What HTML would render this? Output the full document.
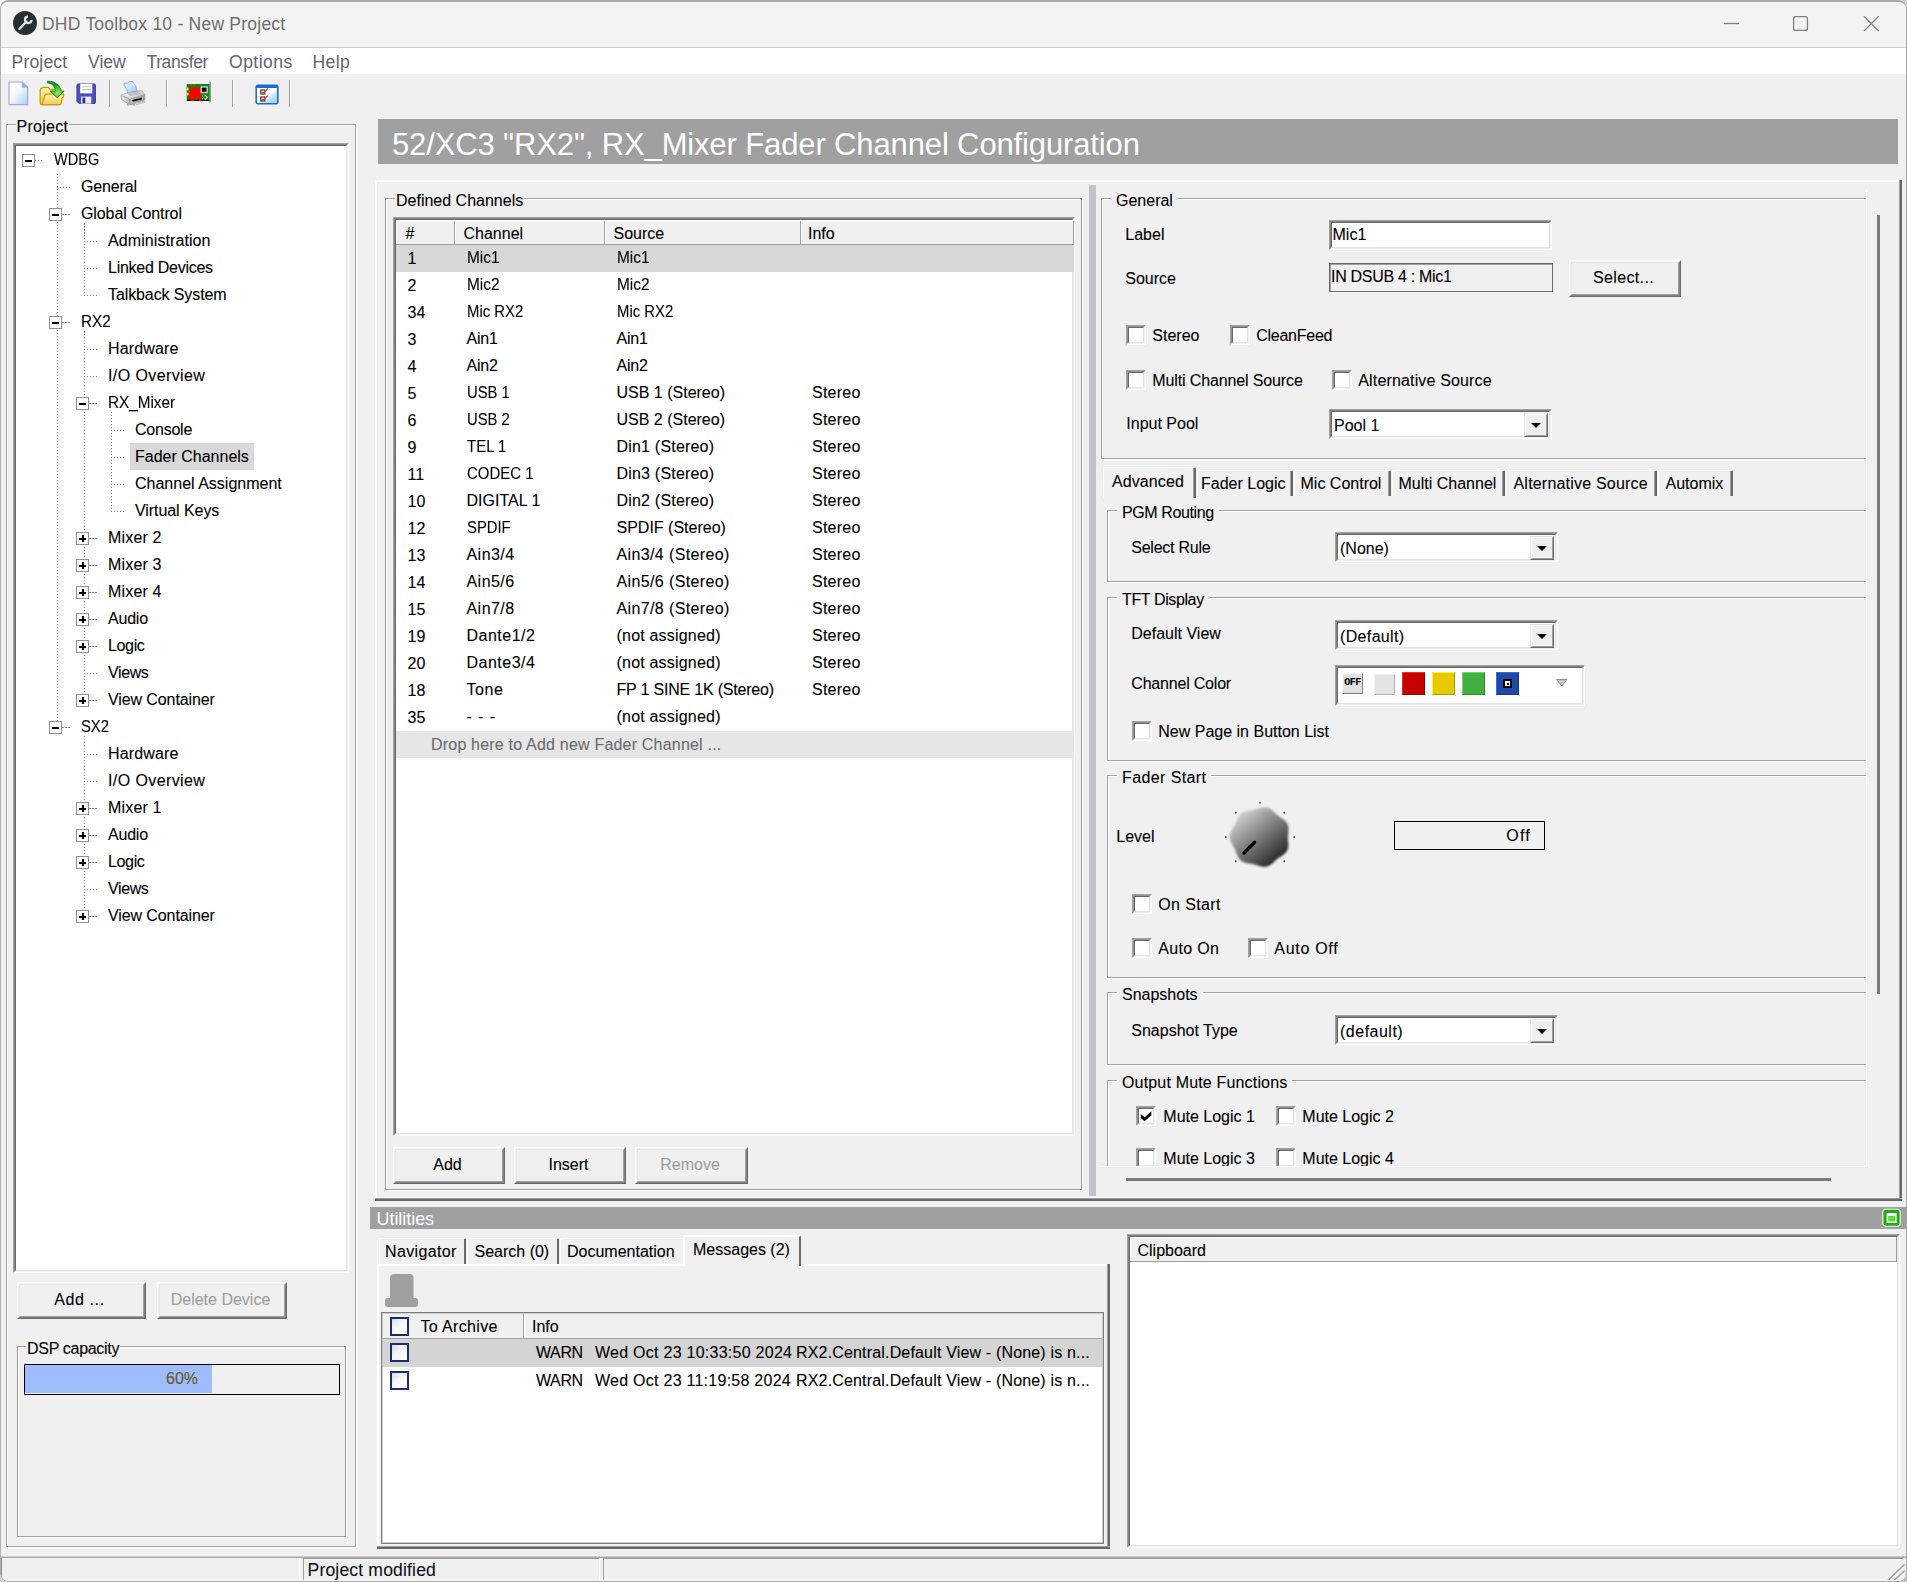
<!DOCTYPE html>
<html><head><meta charset="utf-8"><title>DHD Toolbox 10 - New Project</title>
<style>
html,body{margin:0;padding:0;background:#dcdcdc;}
body{width:1907px;height:1582px;overflow:hidden;position:relative;font-family:"Liberation Sans", sans-serif;font-size:16px;-webkit-text-stroke:0.1px currentColor;}
#win{position:absolute;left:0;top:0;width:1907px;height:1582px;box-sizing:border-box;background:#f0f0f0;border-radius:8px;overflow:hidden;}
#win div{position:absolute;}
#win svg{position:absolute;}
.cn{position:absolute;width:10px;height:10px;}
</style></head><body>
<div class="cn" style="left:0;top:0;background:#fdfdfd"></div><div class="cn" style="right:0;top:0;background:#cfcfcf"></div><div class="cn" style="left:0;bottom:0;background:#d0d2d3"></div><div class="cn" style="right:0;bottom:0;background:#bebebe"></div>
<div id="win">
<div style="left:0px;top:0px;width:1907px;height:47px;background:#f3f3f3;"></div>
<div style="left:0px;top:47px;width:1907px;height:1px;background:#cfcfcf;"></div>
<div style="left:0px;top:48px;width:1907px;height:26px;background:#fff;"></div>
<svg style="left:12px;top:10px" width="26" height="26" viewBox="0 0 26 26"><circle cx="13" cy="13" r="12" fill="#272f32"/><path d="M19.6 10.0 A3.3 3.3 0 1 1 16.0 6.4" fill="none" stroke="#dfe4e5" stroke-width="2.3" stroke-linecap="butt"/><path d="M14.2 11.8 L7.4 19.0" stroke="#dfe4e5" stroke-width="2.4" stroke-linecap="round" fill="none"/></svg>
<div style="left:42px;top:14px;font-size:17.5px;line-height:21px;color:#6e6e6e;white-space:nowrap;letter-spacing:0.23px;-webkit-text-stroke:0;">DHD Toolbox 10 - New Project</div>
<svg style="left:1700px;top:0" width="207" height="47" viewBox="0 0 207 47"><path d="M24 23.5 H39" stroke="#808080" stroke-width="1.3" fill="none"/><rect x="93.6" y="16.6" width="13.8" height="13.8" rx="2" fill="none" stroke="#808080" stroke-width="1.3"/><path d="M164 16.3 L178.7 31 M178.7 16.3 L164 31" stroke="#808080" stroke-width="1.3" fill="none"/></svg>
<div style="left:11.5px;top:52px;font-size:17.6px;line-height:21px;color:#656270;white-space:nowrap;letter-spacing:0.15px;-webkit-text-stroke:0;">Project</div>
<div style="left:88px;top:52px;font-size:17.6px;line-height:21px;color:#656270;white-space:nowrap;letter-spacing:0px;-webkit-text-stroke:0;">View</div>
<div style="left:146.5px;top:52px;font-size:17.6px;line-height:21px;color:#656270;white-space:nowrap;letter-spacing:-0.42px;-webkit-text-stroke:0;">Transfer</div>
<div style="left:229px;top:52px;font-size:17.6px;line-height:21px;color:#656270;white-space:nowrap;letter-spacing:0.45px;-webkit-text-stroke:0;">Options</div>
<div style="left:312.5px;top:52px;font-size:17.6px;line-height:21px;color:#656270;white-space:nowrap;letter-spacing:0.4px;-webkit-text-stroke:0;">Help</div>
<div style="left:109px;top:80px;width:1px;height:27px;background:#a0a0a0;"></div>
<div style="left:110px;top:80px;width:1px;height:27px;background:#fff;"></div>
<div style="left:166px;top:80px;width:1px;height:27px;background:#a0a0a0;"></div>
<div style="left:167px;top:80px;width:1px;height:27px;background:#fff;"></div>
<div style="left:232px;top:80px;width:1px;height:27px;background:#a0a0a0;"></div>
<div style="left:233px;top:80px;width:1px;height:27px;background:#fff;"></div>
<div style="left:289px;top:80px;width:1px;height:27px;background:#a0a0a0;"></div>
<div style="left:290px;top:80px;width:1px;height:27px;background:#fff;"></div>
<svg style="left:8px;top:81.3px" width="20.6" height="24.6" viewBox="0 0 21 25.5" preserveAspectRatio="none"><defs><linearGradient id="gdoc" x1="0" y1="0" x2="1" y2="1"><stop offset="0" stop-color="#ffffff"/><stop offset="0.45" stop-color="#f4f8fe"/><stop offset="1" stop-color="#a9d0f5"/></linearGradient></defs><path d="M1 1 H14.5 L20 6.5 V24.5 H1 Z" fill="url(#gdoc)" stroke="#a9a5dd" stroke-width="1.2"/><path d="M14.5 1 V6.5 H20 Z" fill="#7fb8f0" stroke="#a9a5dd" stroke-width="0.8"/></svg>
<svg style="left:39px;top:80px" width="27" height="27" viewBox="0 0 27 27"><defs><linearGradient id="gfol" x1="0" y1="0" x2="0" y2="1"><stop offset="0" stop-color="#fff3a8"/><stop offset="1" stop-color="#fbc858"/></linearGradient><linearGradient id="gfob" x1="0" y1="0" x2="0" y2="1"><stop offset="0" stop-color="#fffba4"/><stop offset="1" stop-color="#f3c650"/></linearGradient><radialGradient id="garr" cx="0.62" cy="0.72" r="0.5"><stop offset="0" stop-color="#8cec60"/><stop offset="0.6" stop-color="#4cc432"/><stop offset="1" stop-color="#1c9418"/></radialGradient></defs><path d="M1.2 10 Q1.2 8.2 3 8 L4.2 7.4 H9.6 L10.9 9.3 H20 V24.6 H2.6 Q1.2 24.6 1.2 23 Z" fill="url(#gfob)" stroke="#c89a14" stroke-width="1.3" stroke-linejoin="round"/><path d="M6.3 14.2 H24.6 L24.4 17 L23 18 L22.6 22 L21.6 24.6 H3 L5 18 Z" fill="url(#gfol)" stroke="#c89a14" stroke-width="1.3" stroke-linejoin="round"/><path d="M8.3 1.2 Q15.5 0.8 19.7 5.7 Q21.8 8.2 22.3 11.05 L25.1 11.05 L18.2 17.7 L11.3 11.05 L16.5 11.05 Q16.3 8.5 15.0 6.2 Q12.8 3 8.3 2.9 Z" fill="url(#garr)" stroke="#168a12" stroke-width="0.9" stroke-linejoin="round"/></svg>
<svg style="left:75.6px;top:82.6px" width="20.4" height="21.6" viewBox="0 0 22 23" preserveAspectRatio="none"><path d="M1 2.5 Q1 1 2.5 1 H19.5 Q21 1 21 2.5 V20.5 Q21 22 19.5 22 H3.5 L1 19.5 Z" fill="#4a4fc0" stroke="#3a3da0" stroke-width="1"/><rect x="4.5" y="1" width="13" height="10" fill="#fff"/><path d="M6 4 H16 M6 7 H16" stroke="#c8c8c8" stroke-width="1.2"/><rect x="5.5" y="14.5" width="11" height="7.5" fill="#ecebe6"/><rect x="7" y="15.5" width="3" height="6" fill="#2a2da0"/></svg>
<svg style="left:120px;top:80px" width="27" height="27" viewBox="0 0 27 27"><defs><linearGradient id="gprn" x1="0" y1="0" x2="1" y2="0.6"><stop offset="0" stop-color="#ffffff"/><stop offset="1" stop-color="#c4c4c4"/></linearGradient><linearGradient id="gprf" x1="0" y1="0" x2="1" y2="0"><stop offset="0" stop-color="#ececec"/><stop offset="1" stop-color="#b4b4b4"/></linearGradient><linearGradient id="gprr" x1="0" y1="0" x2="1" y2="0"><stop offset="0" stop-color="#c6c6c6"/><stop offset="1" stop-color="#9c9c9c"/></linearGradient><linearGradient id="gpap" x1="0.1" y1="0" x2="0.9" y2="1"><stop offset="0" stop-color="#f4fbff"/><stop offset="1" stop-color="#8fcdf6"/></linearGradient></defs><path d="M1.2 15.3 L10 19 V25 L1.2 19.2 Z" fill="url(#gprf)" stroke="#9e9e9e" stroke-width="0.8"/><path d="M10 19 L24.8 14.5 V19.8 L10 25 Z" fill="url(#gprr)" stroke="#949494" stroke-width="0.8"/><path d="M1.2 15.3 L8 12.3 L21.8 10.6 L24.8 14.5 L10 19 Z" fill="url(#gprn)" stroke="#a4a4a4" stroke-width="0.8"/><path d="M7.2 13.4 L18 10.9 L20.5 13.6 L10.5 16.3 Z" fill="#b8b8bc" opacity="0.75"/><path d="M12 19.9 L21.8 17.7 V19.4 L12.8 21.7 Z" fill="#0c0c0c"/><path d="M15 23 L24.8 21.2 V22.3 L16.5 24.7 Z" fill="#e0e0e0" stroke="#a8a8a8" stroke-width="0.7"/><rect x="6.8" y="24" width="2.4" height="1.6" fill="#a8a8a8"/><rect x="12.6" y="24" width="2.4" height="1.6" fill="#a8a8a8"/><path d="M4 3.1 H8 L8.9 1.6 H12.8 L13.2 3.1 L15.8 5.3 L16.4 9.8 L17.5 10.6 L7.6 13.2 L7.2 9.8 L5.3 8 V6.1 L4 5.7 Z" fill="url(#gpap)" stroke="#a29ede" stroke-width="0.9" stroke-linejoin="round"/></svg>
<svg style="left:186px;top:81px" width="26" height="23" viewBox="0 0 26 23"><defs><linearGradient id="gcard" x1="0" y1="0" x2="0" y2="1"><stop offset="0" stop-color="#0a8a0a"/><stop offset="0.86" stop-color="#0a8a0a"/><stop offset="0.95" stop-color="#042a04"/><stop offset="1" stop-color="#000"/></linearGradient><radialGradient id="gyel" cx="0.2" cy="0.5" r="0.8"><stop offset="0" stop-color="#ffff20"/><stop offset="0.55" stop-color="#ffe010"/><stop offset="1" stop-color="#ff2000" stop-opacity="0"/></radialGradient></defs><rect x="0.7" y="3" width="23" height="17" fill="url(#gcard)"/><rect x="23.6" y="0.4" width="1.2" height="21" fill="#7c7c7c"/><path d="M3.2 6.6 H14.5 L15.5 8 V20 H13.4 L10.6 15 L7.8 20 H5.5 L4 18 L0.7 14.3 V13 L3 12.2 L5.2 10.3 L3 8.4 L0.7 8 V6.6 Z" fill="#ff0000"/><rect x="0.7" y="6.4" width="2.6" height="3.2" fill="url(#gyel)"/><rect x="0.7" y="11.6" width="2.6" height="3" fill="url(#gyel)"/><rect x="4" y="3.3" width="1.6" height="1.6" fill="#f03018"/><rect x="7.2" y="3.3" width="1.6" height="1.6" fill="#f03018"/><rect x="15.2" y="5.9" width="6" height="5.6" fill="#000" stroke="#c4c8c4" stroke-width="1.5"/><path d="M16 15 H19 M16 17.8 H19" stroke="#b4d4b4" stroke-width="1.0" stroke-dasharray="1.1 0.9" fill="none"/><path d="M18.8 13.8 L21.4 16.4 L18.8 19" stroke="#c4dcc4" stroke-width="1.1" fill="none"/></svg>
<svg style="left:255px;top:84px" width="24" height="21" viewBox="0 0 24 21"><defs><linearGradient id="gchk" x1="0.3" y1="0.1" x2="0.95" y2="0.95"><stop offset="0" stop-color="#ffffff"/><stop offset="0.4" stop-color="#ffffff"/><stop offset="0.75" stop-color="#b4daff"/><stop offset="1" stop-color="#a4d0fc"/></linearGradient></defs><rect x="1.2" y="1.2" width="21.6" height="18.6" rx="1.5" fill="url(#gchk)" stroke="#1a6bd6" stroke-width="1.6"/><rect x="1.2" y="1" width="21.6" height="3" fill="#1a6bd6"/><rect x="5.8" y="6" width="4" height="4" fill="none" stroke="#4a3636" stroke-width="1.2"/><rect x="5.8" y="13" width="4" height="4" fill="none" stroke="#4a3636" stroke-width="1.2"/><path d="M6.8 8 L8 9.3 L13 4.5 M6.8 15 L8 16.3 L13 11.5" stroke="#e0442a" stroke-width="1.3" fill="none"/></svg>
<div style="left:0px;top:1556px;width:1907px;height:1px;background:#cecece;"></div>
<div style="left:0px;top:1557px;width:1907px;height:1px;background:#a6a6a6;"></div>
<div style="left:299px;top:1558px;width:1px;height:23px;background:#fff;"></div>
<div style="left:303px;top:1558px;width:1px;height:23px;background:#a0a0a0;"></div>
<div style="left:303px;top:1558px;width:296px;height:1px;background:#a0a0a0;"></div>
<div style="left:599px;top:1558px;width:1px;height:23px;background:#fff;"></div>
<div style="left:603px;top:1558px;width:1px;height:23px;background:#a0a0a0;"></div>
<div style="left:603px;top:1558px;width:1300px;height:1px;background:#a0a0a0;"></div>
<div style="left:307.5px;top:1560px;font-size:17.6px;line-height:21px;color:#101020;white-space:nowrap;letter-spacing:0.15px;">Project modified</div>
<svg style="left:1884px;top:1560px" width="22" height="21" viewBox="0 0 22 21"><path d="M4.2 20.2 L20.2 4.8 M10.6 20.2 L20.2 11" stroke="#a2a2a2" stroke-width="1.7" stroke-linecap="round"/><path d="M5.8 20.4 L20.4 6.4 M12.2 20.4 L20.4 12.6 M17 20.4 L20.6 17" stroke="#fff" stroke-width="0.9"/></svg>
<div style="left:0px;top:1580px;width:1907px;height:1px;background:#fbfbfb;"></div>
<div style="left:1px;top:1558px;width:1px;height:20px;background:#8a8a8a;"></div>
<div style="left:6px;top:124px;width:350px;height:1px;background:#a0a0a0;"></div>
<div style="left:7px;top:125px;width:348px;height:1px;background:#fff;"></div>
<div style="left:6px;top:124px;width:1px;height:1423px;background:#a0a0a0;"></div>
<div style="left:7px;top:125px;width:1px;height:1421px;background:#fff;"></div>
<div style="left:355px;top:124px;width:1px;height:1423px;background:#a0a0a0;"></div>
<div style="left:356px;top:124px;width:1px;height:1424px;background:#fff;"></div>
<div style="left:6px;top:1546px;width:350px;height:1px;background:#a0a0a0;"></div>
<div style="left:6px;top:1547px;width:351px;height:1px;background:#fff;"></div>
<div style="left:16.6px;top:118px;font-size:16px;line-height:18px;color:#000;white-space:nowrap;background:#f0f0f0;padding:0 1px;margin-left:-1px;letter-spacing:0.25px;">Project</div>
<div style="left:13px;top:143px;width:336px;height:1130px;background:#fff;box-sizing:border-box;border:1px solid;border-color:#a0a0a0 #fff #fff #a0a0a0;"><div style="position:absolute;left:0;top:0;right:0;bottom:0;border:1px solid;border-color:#858585 #f1f1f1 #f1f1f1 #858585;box-sizing:border-box;"></div><div style="position:absolute;left:1px;top:1px;right:1px;bottom:1px;border:1px solid;border-color:#696969 #e3e3e3 #e3e3e3 #696969;box-sizing:border-box;"></div></div>
<div style="left:57px;top:174px;width:1px;height:547px;background:repeating-linear-gradient(to bottom,#858585 0 1.5px,transparent 1.5px 3px);"></div>
<div style="left:84px;top:223px;width:1px;height:73px;background:repeating-linear-gradient(to bottom,#858585 0 1.5px,transparent 1.5px 3px);"></div>
<div style="left:84px;top:331px;width:1px;height:363px;background:repeating-linear-gradient(to bottom,#858585 0 1.5px,transparent 1.5px 3px);"></div>
<div style="left:84px;top:736px;width:1px;height:174px;background:repeating-linear-gradient(to bottom,#858585 0 1.5px,transparent 1.5px 3px);"></div>
<div style="left:111px;top:412px;width:1px;height:100px;background:repeating-linear-gradient(to bottom,#858585 0 1.5px,transparent 1.5px 3px);"></div>
<div style="left:35px;top:160px;width:9px;height:1px;background:repeating-linear-gradient(to right,#858585 0 1.5px,transparent 1.5px 3px);"></div>
<div style="left:22px;top:154px;width:13px;height:13px;background:#fff;box-sizing:border-box;border:1px solid #919191;"><div style="left:2px;top:4.5px;width:7px;height:2px;background:#000"></div></div>
<div style="left:54px;top:150px;font-size:16px;line-height:20px;color:#000;white-space:nowrap;letter-spacing:0px;transform:scaleX(0.908);transform-origin:0 0;">WDBG</div>
<div style="left:57px;top:187px;width:14px;height:1px;background:repeating-linear-gradient(to right,#858585 0 1.5px,transparent 1.5px 3px);"></div>
<div style="left:81px;top:177px;font-size:16px;line-height:20px;color:#000;white-space:nowrap;letter-spacing:-0.15px;">General</div>
<div style="left:62px;top:214px;width:9px;height:1px;background:repeating-linear-gradient(to right,#858585 0 1.5px,transparent 1.5px 3px);"></div>
<div style="left:49px;top:208px;width:13px;height:13px;background:#fff;box-sizing:border-box;border:1px solid #919191;"><div style="left:2px;top:4.5px;width:7px;height:2px;background:#000"></div></div>
<div style="left:81px;top:204px;font-size:16px;line-height:20px;color:#000;white-space:nowrap;letter-spacing:-0.1px;">Global Control</div>
<div style="left:84px;top:241px;width:14px;height:1px;background:repeating-linear-gradient(to right,#858585 0 1.5px,transparent 1.5px 3px);"></div>
<div style="left:108px;top:231px;font-size:16px;line-height:20px;color:#000;white-space:nowrap;letter-spacing:0.08px;">Administration</div>
<div style="left:84px;top:268px;width:14px;height:1px;background:repeating-linear-gradient(to right,#858585 0 1.5px,transparent 1.5px 3px);"></div>
<div style="left:108px;top:258px;font-size:16px;line-height:20px;color:#000;white-space:nowrap;letter-spacing:-0.26px;">Linked Devices</div>
<div style="left:84px;top:295px;width:14px;height:1px;background:repeating-linear-gradient(to right,#858585 0 1.5px,transparent 1.5px 3px);"></div>
<div style="left:108px;top:285px;font-size:16px;line-height:20px;color:#000;white-space:nowrap;letter-spacing:-0.1px;">Talkback System</div>
<div style="left:62px;top:322px;width:9px;height:1px;background:repeating-linear-gradient(to right,#858585 0 1.5px,transparent 1.5px 3px);"></div>
<div style="left:49px;top:316px;width:13px;height:13px;background:#fff;box-sizing:border-box;border:1px solid #919191;"><div style="left:2px;top:4.5px;width:7px;height:2px;background:#000"></div></div>
<div style="left:81px;top:312px;font-size:16px;line-height:20px;color:#000;white-space:nowrap;letter-spacing:0px;transform:scaleX(0.957);transform-origin:0 0;">RX2</div>
<div style="left:84px;top:349px;width:14px;height:1px;background:repeating-linear-gradient(to right,#858585 0 1.5px,transparent 1.5px 3px);"></div>
<div style="left:108px;top:339px;font-size:16px;line-height:20px;color:#000;white-space:nowrap;letter-spacing:0.15px;">Hardware</div>
<div style="left:84px;top:376px;width:14px;height:1px;background:repeating-linear-gradient(to right,#858585 0 1.5px,transparent 1.5px 3px);"></div>
<div style="left:108px;top:366px;font-size:16px;line-height:20px;color:#000;white-space:nowrap;letter-spacing:0.4px;">I/O Overview</div>
<div style="left:89px;top:403px;width:9px;height:1px;background:repeating-linear-gradient(to right,#858585 0 1.5px,transparent 1.5px 3px);"></div>
<div style="left:76px;top:397px;width:13px;height:13px;background:#fff;box-sizing:border-box;border:1px solid #919191;"><div style="left:2px;top:4.5px;width:7px;height:2px;background:#000"></div></div>
<div style="left:108px;top:393px;font-size:16px;line-height:20px;color:#000;white-space:nowrap;letter-spacing:0px;transform:scaleX(0.955);transform-origin:0 0;">RX_Mixer</div>
<div style="left:111px;top:430px;width:14px;height:1px;background:repeating-linear-gradient(to right,#858585 0 1.5px,transparent 1.5px 3px);"></div>
<div style="left:135px;top:420px;font-size:16px;line-height:20px;color:#000;white-space:nowrap;letter-spacing:-0.23px;">Console</div>
<div style="left:111px;top:457px;width:14px;height:1px;background:repeating-linear-gradient(to right,#858585 0 1.5px,transparent 1.5px 3px);"></div>
<div style="left:130px;top:443px;width:124px;height:27px;background:#d9d9d9;"></div>
<div style="left:135px;top:447px;font-size:16px;line-height:20px;color:#000;white-space:nowrap;letter-spacing:0px;">Fader Channels</div>
<div style="left:111px;top:484px;width:14px;height:1px;background:repeating-linear-gradient(to right,#858585 0 1.5px,transparent 1.5px 3px);"></div>
<div style="left:135px;top:474px;font-size:16px;line-height:20px;color:#000;white-space:nowrap;letter-spacing:0px;">Channel Assignment</div>
<div style="left:111px;top:511px;width:14px;height:1px;background:repeating-linear-gradient(to right,#858585 0 1.5px,transparent 1.5px 3px);"></div>
<div style="left:135px;top:501px;font-size:16px;line-height:20px;color:#000;white-space:nowrap;letter-spacing:-0.07px;">Virtual Keys</div>
<div style="left:89px;top:538px;width:9px;height:1px;background:repeating-linear-gradient(to right,#858585 0 1.5px,transparent 1.5px 3px);"></div>
<div style="left:76px;top:532px;width:13px;height:13px;background:#fff;box-sizing:border-box;border:1px solid #919191;"><div style="left:2px;top:4.5px;width:7px;height:2px;background:#000"></div><div style="left:4.5px;top:2px;width:2px;height:7px;background:#000"></div></div>
<div style="left:108px;top:528px;font-size:16px;line-height:20px;color:#000;white-space:nowrap;letter-spacing:0.17px;">Mixer 2</div>
<div style="left:89px;top:565px;width:9px;height:1px;background:repeating-linear-gradient(to right,#858585 0 1.5px,transparent 1.5px 3px);"></div>
<div style="left:76px;top:559px;width:13px;height:13px;background:#fff;box-sizing:border-box;border:1px solid #919191;"><div style="left:2px;top:4.5px;width:7px;height:2px;background:#000"></div><div style="left:4.5px;top:2px;width:2px;height:7px;background:#000"></div></div>
<div style="left:108px;top:555px;font-size:16px;line-height:20px;color:#000;white-space:nowrap;letter-spacing:0.17px;">Mixer 3</div>
<div style="left:89px;top:592px;width:9px;height:1px;background:repeating-linear-gradient(to right,#858585 0 1.5px,transparent 1.5px 3px);"></div>
<div style="left:76px;top:586px;width:13px;height:13px;background:#fff;box-sizing:border-box;border:1px solid #919191;"><div style="left:2px;top:4.5px;width:7px;height:2px;background:#000"></div><div style="left:4.5px;top:2px;width:2px;height:7px;background:#000"></div></div>
<div style="left:108px;top:582px;font-size:16px;line-height:20px;color:#000;white-space:nowrap;letter-spacing:0.17px;">Mixer 4</div>
<div style="left:89px;top:619px;width:9px;height:1px;background:repeating-linear-gradient(to right,#858585 0 1.5px,transparent 1.5px 3px);"></div>
<div style="left:76px;top:613px;width:13px;height:13px;background:#fff;box-sizing:border-box;border:1px solid #919191;"><div style="left:2px;top:4.5px;width:7px;height:2px;background:#000"></div><div style="left:4.5px;top:2px;width:2px;height:7px;background:#000"></div></div>
<div style="left:108px;top:609px;font-size:16px;line-height:20px;color:#000;white-space:nowrap;letter-spacing:-0.2px;">Audio</div>
<div style="left:89px;top:646px;width:9px;height:1px;background:repeating-linear-gradient(to right,#858585 0 1.5px,transparent 1.5px 3px);"></div>
<div style="left:76px;top:640px;width:13px;height:13px;background:#fff;box-sizing:border-box;border:1px solid #919191;"><div style="left:2px;top:4.5px;width:7px;height:2px;background:#000"></div><div style="left:4.5px;top:2px;width:2px;height:7px;background:#000"></div></div>
<div style="left:108px;top:636px;font-size:16px;line-height:20px;color:#000;white-space:nowrap;letter-spacing:-0.35px;">Logic</div>
<div style="left:84px;top:673px;width:14px;height:1px;background:repeating-linear-gradient(to right,#858585 0 1.5px,transparent 1.5px 3px);"></div>
<div style="left:108px;top:663px;font-size:16px;line-height:20px;color:#000;white-space:nowrap;letter-spacing:-0.4px;">Views</div>
<div style="left:89px;top:700px;width:9px;height:1px;background:repeating-linear-gradient(to right,#858585 0 1.5px,transparent 1.5px 3px);"></div>
<div style="left:76px;top:694px;width:13px;height:13px;background:#fff;box-sizing:border-box;border:1px solid #919191;"><div style="left:2px;top:4.5px;width:7px;height:2px;background:#000"></div><div style="left:4.5px;top:2px;width:2px;height:7px;background:#000"></div></div>
<div style="left:108px;top:690px;font-size:16px;line-height:20px;color:#000;white-space:nowrap;letter-spacing:-0.1px;">View Container</div>
<div style="left:62px;top:727px;width:9px;height:1px;background:repeating-linear-gradient(to right,#858585 0 1.5px,transparent 1.5px 3px);"></div>
<div style="left:49px;top:721px;width:13px;height:13px;background:#fff;box-sizing:border-box;border:1px solid #919191;"><div style="left:2px;top:4.5px;width:7px;height:2px;background:#000"></div></div>
<div style="left:81px;top:717px;font-size:16px;line-height:20px;color:#000;white-space:nowrap;letter-spacing:0px;transform:scaleX(0.925);transform-origin:0 0;">SX2</div>
<div style="left:84px;top:754px;width:14px;height:1px;background:repeating-linear-gradient(to right,#858585 0 1.5px,transparent 1.5px 3px);"></div>
<div style="left:108px;top:744px;font-size:16px;line-height:20px;color:#000;white-space:nowrap;letter-spacing:0.15px;">Hardware</div>
<div style="left:84px;top:781px;width:14px;height:1px;background:repeating-linear-gradient(to right,#858585 0 1.5px,transparent 1.5px 3px);"></div>
<div style="left:108px;top:771px;font-size:16px;line-height:20px;color:#000;white-space:nowrap;letter-spacing:0.4px;">I/O Overview</div>
<div style="left:89px;top:808px;width:9px;height:1px;background:repeating-linear-gradient(to right,#858585 0 1.5px,transparent 1.5px 3px);"></div>
<div style="left:76px;top:802px;width:13px;height:13px;background:#fff;box-sizing:border-box;border:1px solid #919191;"><div style="left:2px;top:4.5px;width:7px;height:2px;background:#000"></div><div style="left:4.5px;top:2px;width:2px;height:7px;background:#000"></div></div>
<div style="left:108px;top:798px;font-size:16px;line-height:20px;color:#000;white-space:nowrap;letter-spacing:0.17px;">Mixer 1</div>
<div style="left:89px;top:835px;width:9px;height:1px;background:repeating-linear-gradient(to right,#858585 0 1.5px,transparent 1.5px 3px);"></div>
<div style="left:76px;top:829px;width:13px;height:13px;background:#fff;box-sizing:border-box;border:1px solid #919191;"><div style="left:2px;top:4.5px;width:7px;height:2px;background:#000"></div><div style="left:4.5px;top:2px;width:2px;height:7px;background:#000"></div></div>
<div style="left:108px;top:825px;font-size:16px;line-height:20px;color:#000;white-space:nowrap;letter-spacing:-0.2px;">Audio</div>
<div style="left:89px;top:862px;width:9px;height:1px;background:repeating-linear-gradient(to right,#858585 0 1.5px,transparent 1.5px 3px);"></div>
<div style="left:76px;top:856px;width:13px;height:13px;background:#fff;box-sizing:border-box;border:1px solid #919191;"><div style="left:2px;top:4.5px;width:7px;height:2px;background:#000"></div><div style="left:4.5px;top:2px;width:2px;height:7px;background:#000"></div></div>
<div style="left:108px;top:852px;font-size:16px;line-height:20px;color:#000;white-space:nowrap;letter-spacing:-0.35px;">Logic</div>
<div style="left:84px;top:889px;width:14px;height:1px;background:repeating-linear-gradient(to right,#858585 0 1.5px,transparent 1.5px 3px);"></div>
<div style="left:108px;top:879px;font-size:16px;line-height:20px;color:#000;white-space:nowrap;letter-spacing:-0.4px;">Views</div>
<div style="left:89px;top:916px;width:9px;height:1px;background:repeating-linear-gradient(to right,#858585 0 1.5px,transparent 1.5px 3px);"></div>
<div style="left:76px;top:910px;width:13px;height:13px;background:#fff;box-sizing:border-box;border:1px solid #919191;"><div style="left:2px;top:4.5px;width:7px;height:2px;background:#000"></div><div style="left:4.5px;top:2px;width:2px;height:7px;background:#000"></div></div>
<div style="left:108px;top:906px;font-size:16px;line-height:20px;color:#000;white-space:nowrap;letter-spacing:-0.1px;">View Container</div>
<div style="left:17px;top:1282px;width:129px;height:37px;background:#f0f0f0;box-sizing:border-box;border:1px solid;border-color:#fff #696969 #696969 #fff;"><div style="position:absolute;left:0;top:0;right:0;bottom:0;border:1px solid;border-color:#f4f4f4 #808080 #808080 #f4f4f4;box-sizing:border-box;"></div><div style="position:absolute;left:1px;top:1px;right:1px;bottom:1px;border:1px solid;border-color:#e6e6e6 #a0a0a0 #a0a0a0 #e6e6e6;box-sizing:border-box;"></div><div style="position:absolute;left:-2px;right:2px;top:0;bottom:0;text-align:center;line-height:34px;font-size:16px;color:#000;letter-spacing:0.6px;">Add ...</div></div>
<div style="left:157px;top:1282px;width:130px;height:37px;background:#f0f0f0;box-sizing:border-box;border:1px solid;border-color:#fff #696969 #696969 #fff;"><div style="position:absolute;left:0;top:0;right:0;bottom:0;border:1px solid;border-color:#f4f4f4 #808080 #808080 #f4f4f4;box-sizing:border-box;"></div><div style="position:absolute;left:1px;top:1px;right:1px;bottom:1px;border:1px solid;border-color:#e6e6e6 #a0a0a0 #a0a0a0 #e6e6e6;box-sizing:border-box;"></div><div style="position:absolute;left:-1.5px;right:1.5px;top:0;bottom:0;text-align:center;line-height:34px;font-size:16px;color:#a0a0a0;letter-spacing:0px;">Delete Device</div></div>
<div style="left:17px;top:1346px;width:329px;height:1px;background:#a0a0a0;"></div>
<div style="left:18px;top:1347px;width:327px;height:1px;background:#fff;"></div>
<div style="left:17px;top:1346px;width:1px;height:191px;background:#a0a0a0;"></div>
<div style="left:18px;top:1347px;width:1px;height:189px;background:#fff;"></div>
<div style="left:345px;top:1346px;width:1px;height:191px;background:#a0a0a0;"></div>
<div style="left:346px;top:1346px;width:1px;height:192px;background:#fff;"></div>
<div style="left:17px;top:1536px;width:329px;height:1px;background:#a0a0a0;"></div>
<div style="left:17px;top:1537px;width:330px;height:1px;background:#fff;"></div>
<div style="left:27px;top:1340px;font-size:16px;line-height:18px;color:#000;white-space:nowrap;background:#f0f0f0;padding:0 1px;margin-left:-1px;letter-spacing:-0.3px;">DSP capacity</div>
<div style="left:24px;top:1364px;width:316px;height:31px;background:#f0f0f0;box-sizing:border-box;border:1.5px solid #000;"><div style="left:0;top:0;width:187px;height:28px;background:#9dbdfc"></div></div>
<div style="left:166px;top:1369px;font-size:16px;line-height:20px;color:#6b5526;white-space:nowrap;">60%</div>
<div style="left:378px;top:119px;width:1520px;height:45px;background:#a0a0a0;"></div>
<div style="left:392px;top:127px;font-size:31px;line-height:36px;color:#fff;white-space:nowrap;letter-spacing:-0.13px;-webkit-text-stroke:0;">52/XC3 &quot;RX2&quot;, RX_Mixer Fader Channel Configuration</div>
<div style="left:375px;top:180px;width:2px;height:1021px;background:#fff;"></div>
<div style="left:375px;top:180px;width:1526px;height:2px;background:#fff;"></div>
<div style="left:1899px;top:180px;width:1px;height:1021px;background:#a0a0a0;"></div>
<div style="left:1900px;top:180px;width:2px;height:1021px;background:#696969;"></div>
<div style="left:375px;top:1198px;width:1527px;height:1px;background:#a0a0a0;"></div>
<div style="left:375px;top:1199px;width:1527px;height:2px;background:#696969;"></div>
<div style="left:385px;top:198px;width:697px;height:1px;background:#a0a0a0;"></div>
<div style="left:386px;top:199px;width:695px;height:1px;background:#fff;"></div>
<div style="left:385px;top:198px;width:1px;height:992px;background:#a0a0a0;"></div>
<div style="left:386px;top:199px;width:1px;height:990px;background:#fff;"></div>
<div style="left:1081px;top:198px;width:1px;height:992px;background:#a0a0a0;"></div>
<div style="left:1082px;top:198px;width:1px;height:993px;background:#fff;"></div>
<div style="left:385px;top:1189px;width:697px;height:1px;background:#a0a0a0;"></div>
<div style="left:385px;top:1190px;width:698px;height:1px;background:#fff;"></div>
<div style="left:396px;top:192px;font-size:16px;line-height:18px;color:#000;white-space:nowrap;background:#f0f0f0;padding:0 1px;margin-left:-1px;letter-spacing:0px;">Defined Channels</div>
<div style="left:393px;top:217px;width:682px;height:919px;background:#fff;box-sizing:border-box;border:1px solid;border-color:#a0a0a0 #fff #fff #a0a0a0;"><div style="position:absolute;left:0;top:0;right:0;bottom:0;border:1px solid;border-color:#858585 #f1f1f1 #f1f1f1 #858585;box-sizing:border-box;"></div><div style="position:absolute;left:1px;top:1px;right:1px;bottom:1px;border:1px solid;border-color:#696969 #e3e3e3 #e3e3e3 #696969;box-sizing:border-box;"></div></div>
<div style="left:396px;top:220px;width:678px;height:24px;background:#f0f0f0;"></div>
<div style="left:396px;top:244px;width:678px;height:1px;background:#a0a0a0;"></div>
<div style="left:454px;top:220px;width:1px;height:24px;background:#a0a0a0;"></div>
<div style="left:455px;top:220px;width:1px;height:24px;background:#fff;"></div>
<div style="left:604px;top:220px;width:1px;height:24px;background:#a0a0a0;"></div>
<div style="left:605px;top:220px;width:1px;height:24px;background:#fff;"></div>
<div style="left:800px;top:220px;width:1px;height:24px;background:#a0a0a0;"></div>
<div style="left:801px;top:220px;width:1px;height:24px;background:#fff;"></div>
<div style="left:1073px;top:220px;width:1px;height:24px;background:#a0a0a0;"></div>
<div style="left:396px;top:220px;width:1px;height:24px;background:#fff;"></div>
<div style="left:396px;top:220px;width:678px;height:1px;background:#fff;"></div>
<div style="left:405.5px;top:224px;font-size:16px;line-height:20px;color:#000;white-space:nowrap;">#</div>
<div style="left:463.5px;top:224px;font-size:16px;line-height:20px;color:#000;white-space:nowrap;">Channel</div>
<div style="left:613.5px;top:224px;font-size:16px;line-height:20px;color:#000;white-space:nowrap;">Source</div>
<div style="left:808px;top:224px;font-size:16px;line-height:20px;color:#000;white-space:nowrap;">Info</div>
<div style="left:396px;top:245px;width:678px;height:27px;background:#d7d7d7;"></div>
<div style="left:407.5px;top:249px;font-size:16px;line-height:20px;color:#000;white-space:nowrap;">1</div>
<div style="left:466.5px;top:248px;font-size:16px;line-height:20px;color:#000;white-space:nowrap;letter-spacing:0px;transform:scaleX(0.963);transform-origin:0 0;">Mic1</div>
<div style="left:616.5px;top:248px;font-size:16px;line-height:20px;color:#000;white-space:nowrap;letter-spacing:0px;transform:scaleX(0.963);transform-origin:0 0;">Mic1</div>
<div style="left:407.5px;top:276px;font-size:16px;line-height:20px;color:#000;white-space:nowrap;">2</div>
<div style="left:466.5px;top:275px;font-size:16px;line-height:20px;color:#000;white-space:nowrap;letter-spacing:0px;transform:scaleX(0.963);transform-origin:0 0;">Mic2</div>
<div style="left:616.5px;top:275px;font-size:16px;line-height:20px;color:#000;white-space:nowrap;letter-spacing:0px;transform:scaleX(0.963);transform-origin:0 0;">Mic2</div>
<div style="left:407.5px;top:303px;font-size:16px;line-height:20px;color:#000;white-space:nowrap;">34</div>
<div style="left:466.5px;top:302px;font-size:16px;line-height:20px;color:#000;white-space:nowrap;letter-spacing:0px;transform:scaleX(0.93);transform-origin:0 0;">Mic RX2</div>
<div style="left:616.5px;top:302px;font-size:16px;line-height:20px;color:#000;white-space:nowrap;letter-spacing:0px;transform:scaleX(0.93);transform-origin:0 0;">Mic RX2</div>
<div style="left:407.5px;top:330px;font-size:16px;line-height:20px;color:#000;white-space:nowrap;">3</div>
<div style="left:466.5px;top:329px;font-size:16px;line-height:20px;color:#000;white-space:nowrap;letter-spacing:-0.2px;">Ain1</div>
<div style="left:616.5px;top:329px;font-size:16px;line-height:20px;color:#000;white-space:nowrap;letter-spacing:-0.2px;">Ain1</div>
<div style="left:407.5px;top:357px;font-size:16px;line-height:20px;color:#000;white-space:nowrap;">4</div>
<div style="left:466.5px;top:356px;font-size:16px;line-height:20px;color:#000;white-space:nowrap;letter-spacing:-0.2px;">Ain2</div>
<div style="left:616.5px;top:356px;font-size:16px;line-height:20px;color:#000;white-space:nowrap;letter-spacing:-0.2px;">Ain2</div>
<div style="left:407.5px;top:384px;font-size:16px;line-height:20px;color:#000;white-space:nowrap;">5</div>
<div style="left:466.5px;top:383px;font-size:16px;line-height:20px;color:#000;white-space:nowrap;letter-spacing:0px;transform:scaleX(0.926);transform-origin:0 0;">USB 1</div>
<div style="left:616.5px;top:383px;font-size:16px;line-height:20px;color:#000;white-space:nowrap;letter-spacing:0px;">USB 1 (Stereo)</div>
<div style="left:812px;top:383px;font-size:16px;line-height:20px;color:#000;white-space:nowrap;letter-spacing:0.24px;">Stereo</div>
<div style="left:407.5px;top:411px;font-size:16px;line-height:20px;color:#000;white-space:nowrap;">6</div>
<div style="left:466.5px;top:410px;font-size:16px;line-height:20px;color:#000;white-space:nowrap;letter-spacing:0px;transform:scaleX(0.926);transform-origin:0 0;">USB 2</div>
<div style="left:616.5px;top:410px;font-size:16px;line-height:20px;color:#000;white-space:nowrap;letter-spacing:0px;">USB 2 (Stereo)</div>
<div style="left:812px;top:410px;font-size:16px;line-height:20px;color:#000;white-space:nowrap;letter-spacing:0.24px;">Stereo</div>
<div style="left:407.5px;top:438px;font-size:16px;line-height:20px;color:#000;white-space:nowrap;">9</div>
<div style="left:466.5px;top:437px;font-size:16px;line-height:20px;color:#000;white-space:nowrap;letter-spacing:0px;transform:scaleX(0.937);transform-origin:0 0;">TEL 1</div>
<div style="left:616.5px;top:437px;font-size:16px;line-height:20px;color:#000;white-space:nowrap;letter-spacing:0.2px;">Din1 (Stereo)</div>
<div style="left:812px;top:437px;font-size:16px;line-height:20px;color:#000;white-space:nowrap;letter-spacing:0.24px;">Stereo</div>
<div style="left:407.5px;top:465px;font-size:16px;line-height:20px;color:#000;white-space:nowrap;">11</div>
<div style="left:466.5px;top:464px;font-size:16px;line-height:20px;color:#000;white-space:nowrap;letter-spacing:0px;transform:scaleX(0.935);transform-origin:0 0;">CODEC 1</div>
<div style="left:616.5px;top:464px;font-size:16px;line-height:20px;color:#000;white-space:nowrap;letter-spacing:0.2px;">Din3 (Stereo)</div>
<div style="left:812px;top:464px;font-size:16px;line-height:20px;color:#000;white-space:nowrap;letter-spacing:0.24px;">Stereo</div>
<div style="left:407.5px;top:492px;font-size:16px;line-height:20px;color:#000;white-space:nowrap;">10</div>
<div style="left:466.5px;top:491px;font-size:16px;line-height:20px;color:#000;white-space:nowrap;letter-spacing:0px;">DIGITAL 1</div>
<div style="left:616.5px;top:491px;font-size:16px;line-height:20px;color:#000;white-space:nowrap;letter-spacing:0.2px;">Din2 (Stereo)</div>
<div style="left:812px;top:491px;font-size:16px;line-height:20px;color:#000;white-space:nowrap;letter-spacing:0.24px;">Stereo</div>
<div style="left:407.5px;top:519px;font-size:16px;line-height:20px;color:#000;white-space:nowrap;">12</div>
<div style="left:466.5px;top:518px;font-size:16px;line-height:20px;color:#000;white-space:nowrap;letter-spacing:0px;transform:scaleX(0.927);transform-origin:0 0;">SPDIF</div>
<div style="left:616.5px;top:518px;font-size:16px;line-height:20px;color:#000;white-space:nowrap;letter-spacing:0px;">SPDIF (Stereo)</div>
<div style="left:812px;top:518px;font-size:16px;line-height:20px;color:#000;white-space:nowrap;letter-spacing:0.24px;">Stereo</div>
<div style="left:407.5px;top:546px;font-size:16px;line-height:20px;color:#000;white-space:nowrap;">13</div>
<div style="left:466.5px;top:545px;font-size:16px;line-height:20px;color:#000;white-space:nowrap;letter-spacing:0.45px;">Ain3/4</div>
<div style="left:616.5px;top:545px;font-size:16px;line-height:20px;color:#000;white-space:nowrap;letter-spacing:0.38px;">Ain3/4 (Stereo)</div>
<div style="left:812px;top:545px;font-size:16px;line-height:20px;color:#000;white-space:nowrap;letter-spacing:0.24px;">Stereo</div>
<div style="left:407.5px;top:573px;font-size:16px;line-height:20px;color:#000;white-space:nowrap;">14</div>
<div style="left:466.5px;top:572px;font-size:16px;line-height:20px;color:#000;white-space:nowrap;letter-spacing:0.45px;">Ain5/6</div>
<div style="left:616.5px;top:572px;font-size:16px;line-height:20px;color:#000;white-space:nowrap;letter-spacing:0.38px;">Ain5/6 (Stereo)</div>
<div style="left:812px;top:572px;font-size:16px;line-height:20px;color:#000;white-space:nowrap;letter-spacing:0.24px;">Stereo</div>
<div style="left:407.5px;top:600px;font-size:16px;line-height:20px;color:#000;white-space:nowrap;">15</div>
<div style="left:466.5px;top:599px;font-size:16px;line-height:20px;color:#000;white-space:nowrap;letter-spacing:0.45px;">Ain7/8</div>
<div style="left:616.5px;top:599px;font-size:16px;line-height:20px;color:#000;white-space:nowrap;letter-spacing:0.38px;">Ain7/8 (Stereo)</div>
<div style="left:812px;top:599px;font-size:16px;line-height:20px;color:#000;white-space:nowrap;letter-spacing:0.24px;">Stereo</div>
<div style="left:407.5px;top:627px;font-size:16px;line-height:20px;color:#000;white-space:nowrap;">19</div>
<div style="left:466.5px;top:626px;font-size:16px;line-height:20px;color:#000;white-space:nowrap;letter-spacing:0.5px;">Dante1/2</div>
<div style="left:616.5px;top:626px;font-size:16px;line-height:20px;color:#000;white-space:nowrap;letter-spacing:0.2px;">(not assigned)</div>
<div style="left:812px;top:626px;font-size:16px;line-height:20px;color:#000;white-space:nowrap;letter-spacing:0.24px;">Stereo</div>
<div style="left:407.5px;top:654px;font-size:16px;line-height:20px;color:#000;white-space:nowrap;">20</div>
<div style="left:466.5px;top:653px;font-size:16px;line-height:20px;color:#000;white-space:nowrap;letter-spacing:0.5px;">Dante3/4</div>
<div style="left:616.5px;top:653px;font-size:16px;line-height:20px;color:#000;white-space:nowrap;letter-spacing:0.2px;">(not assigned)</div>
<div style="left:812px;top:653px;font-size:16px;line-height:20px;color:#000;white-space:nowrap;letter-spacing:0.24px;">Stereo</div>
<div style="left:407.5px;top:681px;font-size:16px;line-height:20px;color:#000;white-space:nowrap;">18</div>
<div style="left:466.5px;top:680px;font-size:16px;line-height:20px;color:#000;white-space:nowrap;letter-spacing:0.6px;">Tone</div>
<div style="left:616.5px;top:680px;font-size:16px;line-height:20px;color:#000;white-space:nowrap;letter-spacing:-0.2px;">FP 1 SINE 1K (Stereo)</div>
<div style="left:812px;top:680px;font-size:16px;line-height:20px;color:#000;white-space:nowrap;letter-spacing:0.24px;">Stereo</div>
<div style="left:407.5px;top:708px;font-size:16px;line-height:20px;color:#000;white-space:nowrap;">35</div>
<div style="left:466.5px;top:707px;font-size:16px;line-height:20px;color:#000;white-space:nowrap;letter-spacing:0.9px;">- - -</div>
<div style="left:616.5px;top:707px;font-size:16px;line-height:20px;color:#000;white-space:nowrap;letter-spacing:0.2px;">(not assigned)</div>
<div style="left:396px;top:731px;width:678px;height:27px;background:#e6e6e6;"></div>
<div style="left:431px;top:735px;font-size:16px;line-height:20px;color:#6d6d6d;white-space:nowrap;letter-spacing:0.2px;">Drop here to Add new Fader Channel ...</div>
<div style="left:393px;top:1147px;width:112px;height:37px;background:#f0f0f0;box-sizing:border-box;border:1px solid;border-color:#fff #696969 #696969 #fff;"><div style="position:absolute;left:0;top:0;right:0;bottom:0;border:1px solid;border-color:#f4f4f4 #808080 #808080 #f4f4f4;box-sizing:border-box;"></div><div style="position:absolute;left:1px;top:1px;right:1px;bottom:1px;border:1px solid;border-color:#e6e6e6 #a0a0a0 #a0a0a0 #e6e6e6;box-sizing:border-box;"></div><div style="position:absolute;left:-1.5px;right:1.5px;top:0;bottom:0;text-align:center;line-height:34px;font-size:16px;color:#000;letter-spacing:0px;">Add</div></div>
<div style="left:514px;top:1147px;width:112px;height:37px;background:#f0f0f0;box-sizing:border-box;border:1px solid;border-color:#fff #696969 #696969 #fff;"><div style="position:absolute;left:0;top:0;right:0;bottom:0;border:1px solid;border-color:#f4f4f4 #808080 #808080 #f4f4f4;box-sizing:border-box;"></div><div style="position:absolute;left:1px;top:1px;right:1px;bottom:1px;border:1px solid;border-color:#e6e6e6 #a0a0a0 #a0a0a0 #e6e6e6;box-sizing:border-box;"></div><div style="position:absolute;left:-1.5px;right:1.5px;top:0;bottom:0;text-align:center;line-height:34px;font-size:16px;color:#000;letter-spacing:0px;">Insert</div></div>
<div style="left:635px;top:1147px;width:113px;height:37px;background:#f0f0f0;box-sizing:border-box;border:1px solid;border-color:#fff #696969 #696969 #fff;"><div style="position:absolute;left:0;top:0;right:0;bottom:0;border:1px solid;border-color:#f4f4f4 #808080 #808080 #f4f4f4;box-sizing:border-box;"></div><div style="position:absolute;left:1px;top:1px;right:1px;bottom:1px;border:1px solid;border-color:#e6e6e6 #a0a0a0 #a0a0a0 #e6e6e6;box-sizing:border-box;"></div><div style="position:absolute;left:-1.5px;right:1.5px;top:0;bottom:0;text-align:center;line-height:34px;font-size:16px;color:#a0a0a0;letter-spacing:0px;">Remove</div></div>
<div style="left:1089px;top:185px;width:7px;height:1011px;background:#c3c4c8;"></div>
<div style="left:0;top:0;width:1907px;height:1582px;clip-path:inset(185px 41px 416px 1100px);">
<div style="left:1101px;top:198px;width:765px;height:1px;background:#a0a0a0;"></div>
<div style="left:1102px;top:199px;width:764px;height:1px;background:#fff;"></div>
<div style="left:1101px;top:198px;width:1px;height:261px;background:#a0a0a0;"></div>
<div style="left:1102px;top:199px;width:1px;height:259px;background:#fff;"></div>
<div style="left:1101px;top:458px;width:765px;height:1px;background:#a0a0a0;"></div>
<div style="left:1101px;top:459px;width:765px;height:1px;background:#fff;"></div>
<div style="left:1116px;top:192px;font-size:16px;line-height:18px;color:#000;white-space:nowrap;background:#f0f0f0;padding:0 5px;margin-left:-5px;letter-spacing:0px;">General</div>
<div style="left:1125.3px;top:225px;font-size:16px;line-height:20px;color:#000;white-space:nowrap;letter-spacing:0px;">Label</div>
<div style="left:1329px;top:220px;width:223px;height:30px;background:#fff;box-sizing:border-box;border:1px solid;border-color:#a0a0a0 #fff #fff #a0a0a0;"><div style="position:absolute;left:0;top:0;right:0;bottom:0;border:1px solid;border-color:#858585 #f1f1f1 #f1f1f1 #858585;box-sizing:border-box;"></div><div style="position:absolute;left:1px;top:1px;right:1px;bottom:1px;border:1px solid;border-color:#696969 #e3e3e3 #e3e3e3 #696969;box-sizing:border-box;"></div></div>
<div style="left:1332.5px;top:225px;font-size:16px;line-height:20px;color:#000;white-space:nowrap;">Mic1</div>
<div style="left:1125.3px;top:269px;font-size:16px;line-height:20px;color:#000;white-space:nowrap;letter-spacing:0px;">Source</div>
<div style="left:1329px;top:263px;width:224px;height:29px;background:#f0f0f0;box-sizing:border-box;border:1.5px solid #6a6a6a;box-shadow:inset 1px 1px 0 #a0a0a0;"></div>
<div style="left:1331px;top:267px;font-size:16px;line-height:20px;color:#000;white-space:nowrap;letter-spacing:-0.3px;">IN DSUB 4 : Mic1</div>
<div style="left:1569px;top:260px;width:112px;height:37px;background:#f0f0f0;box-sizing:border-box;border:1px solid;border-color:#fff #696969 #696969 #fff;"><div style="position:absolute;left:0;top:0;right:0;bottom:0;border:1px solid;border-color:#f4f4f4 #808080 #808080 #f4f4f4;box-sizing:border-box;"></div><div style="position:absolute;left:1px;top:1px;right:1px;bottom:1px;border:1px solid;border-color:#e6e6e6 #a0a0a0 #a0a0a0 #e6e6e6;box-sizing:border-box;"></div><div style="position:absolute;left:-1.5px;right:1.5px;top:0;bottom:0;text-align:center;line-height:34px;font-size:16px;color:#000;letter-spacing:0.35px;">Select...</div></div>
<svg style="left:1126px;top:325px" width="20" height="20" viewBox="0 0 20 20"><rect x="0" y="0" width="20" height="20" fill="#fff"/><rect x="0" y="0" width="18.5" height="18.5" fill="#e3e3e3"/><path d="M0 0 H20 L18.5 1.5 H1.5 V18.5 L0 20 Z" fill="#a0a0a0"/><path d="M1.5 1.5 H18.5 L17 3 H3 V17 L1.5 18.5 Z" fill="#696969"/><rect x="3" y="3" width="14" height="14" fill="#fff"/></svg>
<div style="left:1152.3px;top:326px;font-size:16px;line-height:20px;color:#000;white-space:nowrap;letter-spacing:0px;">Stereo</div>
<svg style="left:1230px;top:325px" width="20" height="20" viewBox="0 0 20 20"><rect x="0" y="0" width="20" height="20" fill="#fff"/><rect x="0" y="0" width="18.5" height="18.5" fill="#e3e3e3"/><path d="M0 0 H20 L18.5 1.5 H1.5 V18.5 L0 20 Z" fill="#a0a0a0"/><path d="M1.5 1.5 H18.5 L17 3 H3 V17 L1.5 18.5 Z" fill="#696969"/><rect x="3" y="3" width="14" height="14" fill="#fff"/></svg>
<div style="left:1256.3px;top:326px;font-size:16px;line-height:20px;color:#000;white-space:nowrap;letter-spacing:-0.27px;">CleanFeed</div>
<svg style="left:1126px;top:370px" width="20" height="20" viewBox="0 0 20 20"><rect x="0" y="0" width="20" height="20" fill="#fff"/><rect x="0" y="0" width="18.5" height="18.5" fill="#e3e3e3"/><path d="M0 0 H20 L18.5 1.5 H1.5 V18.5 L0 20 Z" fill="#a0a0a0"/><path d="M1.5 1.5 H18.5 L17 3 H3 V17 L1.5 18.5 Z" fill="#696969"/><rect x="3" y="3" width="14" height="14" fill="#fff"/></svg>
<div style="left:1152.3px;top:371px;font-size:16px;line-height:20px;color:#000;white-space:nowrap;letter-spacing:-0.13px;">Multi Channel Source</div>
<svg style="left:1332px;top:370px" width="20" height="20" viewBox="0 0 20 20"><rect x="0" y="0" width="20" height="20" fill="#fff"/><rect x="0" y="0" width="18.5" height="18.5" fill="#e3e3e3"/><path d="M0 0 H20 L18.5 1.5 H1.5 V18.5 L0 20 Z" fill="#a0a0a0"/><path d="M1.5 1.5 H18.5 L17 3 H3 V17 L1.5 18.5 Z" fill="#696969"/><rect x="3" y="3" width="14" height="14" fill="#fff"/></svg>
<div style="left:1358.3px;top:371px;font-size:16px;line-height:20px;color:#000;white-space:nowrap;letter-spacing:0.15px;">Alternative Source</div>
<div style="left:1126.3px;top:414px;font-size:16px;line-height:20px;color:#000;white-space:nowrap;letter-spacing:0px;">Input Pool</div>
<div style="left:1329px;top:409px;width:223px;height:30px;background:#fff;box-sizing:border-box;border:1px solid;border-color:#a0a0a0 #fff #fff #a0a0a0;"><div style="position:absolute;left:0;top:0;right:0;bottom:0;border:1px solid;border-color:#858585 #f1f1f1 #f1f1f1 #858585;box-sizing:border-box;"></div><div style="position:absolute;left:1px;top:1px;right:1px;bottom:1px;border:1px solid;border-color:#696969 #e3e3e3 #e3e3e3 #696969;box-sizing:border-box;"></div><div style="position:absolute;right:3px;top:3px;width:24px;height:24px;background:#f0f0f0;box-sizing:border-box;border:1px solid;border-color:#e3e3e3 #696969 #696969 #e3e3e3;"><div style="position:absolute;left:0;top:0;right:0;bottom:0;border:1px solid;border-color:#fff #a0a0a0 #a0a0a0 #fff;"></div><div style="position:absolute;left:6px;top:9px;width:0;height:0;border-left:5px solid transparent;border-right:5px solid transparent;border-top:5px solid #000;"></div></div><div style="position:absolute;left:4px;top:0;line-height:32px;font-size:16px;color:#000;letter-spacing:0px;">Pool 1</div></div>
<div style="left:1103px;top:467px;width:93px;height:31px;background:#f0f0f0;box-sizing:border-box;border-left:1px solid #fff;border-top:1px solid #fff;border-right:2px solid #696969;box-shadow:inset -1px 0 0 #a0a0a0;border-radius:2px 2px 0 0;"></div>
<div style="left:1112px;top:472px;font-size:16px;line-height:20px;color:#000;white-space:nowrap;letter-spacing:0.1px;">Advanced</div>
<div style="left:1197px;top:470px;width:96px;height:26px;background:#f0f0f0;box-sizing:border-box;border-left:1px solid #fff;border-top:1px solid #fff;border-right:2px solid #696969;box-shadow:inset -1px 0 0 #a0a0a0;border-radius:2px 2px 0 0;"></div>
<div style="left:1201px;top:474px;font-size:16px;line-height:20px;color:#000;white-space:nowrap;">Fader Logic</div>
<div style="left:1294px;top:470px;width:97px;height:26px;background:#f0f0f0;box-sizing:border-box;border-left:1px solid #fff;border-top:1px solid #fff;border-right:2px solid #696969;box-shadow:inset -1px 0 0 #a0a0a0;border-radius:2px 2px 0 0;"></div>
<div style="left:1300.5px;top:474px;font-size:16px;line-height:20px;color:#000;white-space:nowrap;">Mic Control</div>
<div style="left:1392px;top:470px;width:113px;height:26px;background:#f0f0f0;box-sizing:border-box;border-left:1px solid #fff;border-top:1px solid #fff;border-right:2px solid #696969;box-shadow:inset -1px 0 0 #a0a0a0;border-radius:2px 2px 0 0;"></div>
<div style="left:1398.5px;top:474px;font-size:16px;line-height:20px;color:#000;white-space:nowrap;">Multi Channel</div>
<div style="left:1506px;top:470px;width:151px;height:26px;background:#f0f0f0;box-sizing:border-box;border-left:1px solid #fff;border-top:1px solid #fff;border-right:2px solid #696969;box-shadow:inset -1px 0 0 #a0a0a0;border-radius:2px 2px 0 0;"></div>
<div style="left:1513.5px;top:474px;font-size:16px;line-height:20px;color:#000;white-space:nowrap;letter-spacing:0.2px;">Alternative Source</div>
<div style="left:1658px;top:470px;width:75px;height:26px;background:#f0f0f0;box-sizing:border-box;border-left:1px solid #fff;border-top:1px solid #fff;border-right:2px solid #696969;box-shadow:inset -1px 0 0 #a0a0a0;border-radius:2px 2px 0 0;"></div>
<div style="left:1665.5px;top:474px;font-size:16px;line-height:20px;color:#000;white-space:nowrap;">Automix</div>
<div style="left:1107px;top:510px;width:759px;height:1px;background:#a0a0a0;"></div>
<div style="left:1108px;top:511px;width:758px;height:1px;background:#fff;"></div>
<div style="left:1107px;top:510px;width:1px;height:72px;background:#a0a0a0;"></div>
<div style="left:1108px;top:511px;width:1px;height:70px;background:#fff;"></div>
<div style="left:1107px;top:581px;width:759px;height:1px;background:#a0a0a0;"></div>
<div style="left:1107px;top:582px;width:759px;height:1px;background:#fff;"></div>
<div style="left:1122px;top:504px;font-size:16px;line-height:18px;color:#000;white-space:nowrap;background:#f0f0f0;padding:0 5px;margin-left:-5px;letter-spacing:-0.4px;">PGM Routing</div>
<div style="left:1131.3px;top:538px;font-size:16px;line-height:20px;color:#000;white-space:nowrap;letter-spacing:-0.25px;">Select Rule</div>
<div style="left:1335px;top:532px;width:223px;height:30px;background:#fff;box-sizing:border-box;border:1px solid;border-color:#a0a0a0 #fff #fff #a0a0a0;"><div style="position:absolute;left:0;top:0;right:0;bottom:0;border:1px solid;border-color:#858585 #f1f1f1 #f1f1f1 #858585;box-sizing:border-box;"></div><div style="position:absolute;left:1px;top:1px;right:1px;bottom:1px;border:1px solid;border-color:#696969 #e3e3e3 #e3e3e3 #696969;box-sizing:border-box;"></div><div style="position:absolute;right:3px;top:3px;width:24px;height:24px;background:#f0f0f0;box-sizing:border-box;border:1px solid;border-color:#e3e3e3 #696969 #696969 #e3e3e3;"><div style="position:absolute;left:0;top:0;right:0;bottom:0;border:1px solid;border-color:#fff #a0a0a0 #a0a0a0 #fff;"></div><div style="position:absolute;left:6px;top:9px;width:0;height:0;border-left:5px solid transparent;border-right:5px solid transparent;border-top:5px solid #000;"></div></div><div style="position:absolute;left:4px;top:0;line-height:32px;font-size:16px;color:#000;letter-spacing:0px;">(None)</div></div>
<div style="left:1107px;top:597px;width:759px;height:1px;background:#a0a0a0;"></div>
<div style="left:1108px;top:598px;width:758px;height:1px;background:#fff;"></div>
<div style="left:1107px;top:597px;width:1px;height:164px;background:#a0a0a0;"></div>
<div style="left:1108px;top:598px;width:1px;height:162px;background:#fff;"></div>
<div style="left:1107px;top:760px;width:759px;height:1px;background:#a0a0a0;"></div>
<div style="left:1107px;top:761px;width:759px;height:1px;background:#fff;"></div>
<div style="left:1122px;top:591px;font-size:16px;line-height:18px;color:#000;white-space:nowrap;background:#f0f0f0;padding:0 5px;margin-left:-5px;letter-spacing:-0.38px;">TFT Display</div>
<div style="left:1131.3px;top:624px;font-size:16px;line-height:20px;color:#000;white-space:nowrap;letter-spacing:0px;">Default View</div>
<div style="left:1335px;top:620px;width:223px;height:30px;background:#fff;box-sizing:border-box;border:1px solid;border-color:#a0a0a0 #fff #fff #a0a0a0;"><div style="position:absolute;left:0;top:0;right:0;bottom:0;border:1px solid;border-color:#858585 #f1f1f1 #f1f1f1 #858585;box-sizing:border-box;"></div><div style="position:absolute;left:1px;top:1px;right:1px;bottom:1px;border:1px solid;border-color:#696969 #e3e3e3 #e3e3e3 #696969;box-sizing:border-box;"></div><div style="position:absolute;right:3px;top:3px;width:24px;height:24px;background:#f0f0f0;box-sizing:border-box;border:1px solid;border-color:#e3e3e3 #696969 #696969 #e3e3e3;"><div style="position:absolute;left:0;top:0;right:0;bottom:0;border:1px solid;border-color:#fff #a0a0a0 #a0a0a0 #fff;"></div><div style="position:absolute;left:6px;top:9px;width:0;height:0;border-left:5px solid transparent;border-right:5px solid transparent;border-top:5px solid #000;"></div></div><div style="position:absolute;left:4px;top:0;line-height:32px;font-size:16px;color:#000;letter-spacing:0.35px;">(Default)</div></div>
<div style="left:1131.3px;top:674px;font-size:16px;line-height:20px;color:#000;white-space:nowrap;letter-spacing:-0.2px;">Channel Color</div>
<div style="left:1335px;top:665px;width:250px;height:41px;background:#fff;box-sizing:border-box;border:1px solid;border-color:#a0a0a0 #fff #fff #a0a0a0;"><div style="position:absolute;left:0;top:0;right:0;bottom:0;border:1px solid;border-color:#858585 #f1f1f1 #f1f1f1 #858585;box-sizing:border-box;"></div><div style="position:absolute;left:1px;top:1px;right:1px;bottom:1px;border:1px solid;border-color:#696969 #e3e3e3 #e3e3e3 #696969;box-sizing:border-box;"></div></div>
<div style="left:1342px;top:673px;width:21px;height:21px;background:#e2e2e2;box-sizing:border-box;border:1px solid;border-color:#fff #808080 #808080 #fff;"><div style="left:0;top:0;width:19px;height:19px;line-height:18px;text-align:center;font-family:'Liberation Mono',monospace;font-weight:bold;font-size:10px;letter-spacing:-0.5px;color:#000;">OFF</div></div>
<div style="left:1374px;top:674px;width:21px;height:21px;background:#e4e4e4;box-sizing:border-box;border:1px solid;border-color:#f4f4f4 #b0b0b0 #b0b0b0 #f4f4f4;"></div>
<div style="left:1402px;top:672px;width:23px;height:23px;background:#c80000;box-sizing:border-box;border:1px solid;border-color:#e03030 #900000 #900000 #e03030;"></div>
<div style="left:1432px;top:672px;width:23px;height:23px;background:#e8c800;box-sizing:border-box;border:1px solid;border-color:#fff040 #b09800 #b09800 #fff040;"></div>
<div style="left:1462px;top:672px;width:23px;height:23px;background:#40b040;box-sizing:border-box;border:1px solid;border-color:#70d870 #2c8c2c #2c8c2c #70d870;"></div>
<div style="left:1496px;top:672px;width:23px;height:23px;background:#2048a8;box-sizing:border-box;border:1px solid;border-color:#4068c8 #143480 #143480 #4068c8;"></div>
<div style="left:1503px;top:679px;width:9px;height:9px;background:#fff;box-sizing:border-box;border:2px solid #000;"></div>
<div style="left:1505.5px;top:681.5px;width:4px;height:4px;background:#fff;"></div>
<div style="left:1506.5px;top:682.5px;width:2px;height:2px;background:#000;"></div>
<svg style="left:1555px;top:678px" width="14" height="10" viewBox="0 0 14 10"><path d="M1.5 1.5 H12 L6.8 8 Z" fill="#c8c8c8" stroke="#909090" stroke-width="1"/></svg>
<svg style="left:1132px;top:721px" width="20" height="20" viewBox="0 0 20 20"><rect x="0" y="0" width="20" height="20" fill="#fff"/><rect x="0" y="0" width="18.5" height="18.5" fill="#e3e3e3"/><path d="M0 0 H20 L18.5 1.5 H1.5 V18.5 L0 20 Z" fill="#a0a0a0"/><path d="M1.5 1.5 H18.5 L17 3 H3 V17 L1.5 18.5 Z" fill="#696969"/><rect x="3" y="3" width="14" height="14" fill="#fff"/></svg>
<div style="left:1158.3px;top:722px;font-size:16px;line-height:20px;color:#000;white-space:nowrap;letter-spacing:0px;">New Page in Button List</div>
<div style="left:1107px;top:775px;width:759px;height:1px;background:#a0a0a0;"></div>
<div style="left:1108px;top:776px;width:758px;height:1px;background:#fff;"></div>
<div style="left:1107px;top:775px;width:1px;height:203px;background:#a0a0a0;"></div>
<div style="left:1108px;top:776px;width:1px;height:201px;background:#fff;"></div>
<div style="left:1107px;top:977px;width:759px;height:1px;background:#a0a0a0;"></div>
<div style="left:1107px;top:978px;width:759px;height:1px;background:#fff;"></div>
<div style="left:1122px;top:769px;font-size:16px;line-height:18px;color:#000;white-space:nowrap;background:#f0f0f0;padding:0 5px;margin-left:-5px;letter-spacing:0.4px;">Fader Start</div>
<div style="left:1116.3px;top:827px;font-size:16px;line-height:20px;color:#000;white-space:nowrap;letter-spacing:0px;">Level</div>
<svg style="left:1220px;top:797px" width="80" height="80" viewBox="0 0 80 80"><defs><linearGradient id="gknob" x1="0.2" y1="0.1" x2="0.85" y2="0.9"><stop offset="0" stop-color="#d0d0d0"/><stop offset="0.45" stop-color="#828282"/><stop offset="1" stop-color="#242424"/></linearGradient><filter id="fk" x="-10%" y="-10%" width="120%" height="120%"><feGaussianBlur stdDeviation="0.9"/></filter></defs><polygon points="67.90,40.00 67.92,41.25 67.99,42.52 68.10,43.81 68.22,45.12 68.32,46.46 68.36,47.83 68.31,49.20 68.13,50.56 67.79,51.88 67.30,53.15 66.64,54.34 65.84,55.44 64.91,56.44 63.88,57.35 62.79,58.17 61.67,58.93 60.55,59.65 59.46,60.35 58.41,61.07 57.40,61.81 56.43,62.61 55.48,63.45 54.54,64.34 53.59,65.26 52.60,66.17 51.56,67.06 50.46,67.87 49.28,68.57 48.04,69.14 46.74,69.54 45.40,69.77 44.04,69.83 42.68,69.72 41.32,69.49 40.00,69.15 38.71,68.75 37.45,68.32 36.22,67.90 35.00,67.53 33.79,67.20 32.57,66.94 31.32,66.73 30.04,66.55 28.73,66.37 27.40,66.17 26.06,65.91 24.73,65.55 23.45,65.07 22.23,64.45 21.11,63.69 20.09,62.78 19.20,61.76 18.43,60.62 17.77,59.42 17.21,58.17 16.72,56.91 16.27,55.67 15.83,54.44 15.37,53.26 14.86,52.11 14.30,50.98 13.69,49.87 13.03,48.76 12.35,47.63 11.68,46.46 11.05,45.25 10.51,44.00 10.08,42.69 9.81,41.36 9.70,40.00 9.77,38.64 10.02,37.30 10.43,35.99 10.96,34.73 11.58,33.51 12.26,32.34 12.96,31.21 13.64,30.11 14.28,29.01 14.86,27.89 15.39,26.76 15.88,25.59 16.34,24.38 16.80,23.14 17.29,21.89 17.84,20.64 18.49,19.43 19.24,18.29 20.11,17.24 21.11,16.31 22.22,15.52 23.42,14.88 24.69,14.38 26.01,14.01 27.35,13.74 28.69,13.54 30.01,13.38 31.30,13.22 32.56,13.03 33.79,12.80 35.01,12.50 36.23,12.15 37.46,11.76 38.71,11.35 40.00,10.95 41.32,10.61 42.67,10.36 44.03,10.23 45.40,10.26 46.74,10.46 48.05,10.83 49.30,11.37 50.49,12.06 51.60,12.86 52.65,13.74 53.64,14.66 54.58,15.59 55.51,16.50 56.44,17.37 57.40,18.19 58.39,18.96 59.42,19.69 60.49,20.40 61.60,21.13 62.71,21.89 63.80,22.71 64.84,23.60 65.79,24.59 66.62,25.68 67.30,26.85 67.82,28.11 68.18,29.42 68.38,30.78 68.45,32.15 68.42,33.51 68.31,34.86 68.18,36.18 68.05,37.48 67.95,38.74" fill="url(#gknob)" filter="url(#fk)"/><circle cx="40.00" cy="5.80" r="0.95" fill="#484848"/><circle cx="64.18" cy="15.82" r="0.95" fill="#484848"/><circle cx="74.20" cy="40.00" r="0.95" fill="#484848"/><circle cx="64.18" cy="64.18" r="0.95" fill="#484848"/><circle cx="15.82" cy="64.18" r="0.95" fill="#484848"/><circle cx="5.80" cy="40.00" r="0.95" fill="#484848"/><circle cx="15.82" cy="15.82" r="0.95" fill="#484848"/><path d="M24 56 L34.5 45.3" stroke="#000" stroke-width="3.4" stroke-linecap="round"/></svg>
<div style="left:1394px;top:821px;width:151px;height:29px;background:#f0f0f0;box-sizing:border-box;border:1.5px solid #000;"></div>
<div style="left:1441px;top:826px;font-size:16px;line-height:20px;color:#000;white-space:nowrap;width:90px;text-align:right;letter-spacing:1.2px;">Off</div>
<svg style="left:1132px;top:894px" width="20" height="20" viewBox="0 0 20 20"><rect x="0" y="0" width="20" height="20" fill="#fff"/><rect x="0" y="0" width="18.5" height="18.5" fill="#e3e3e3"/><path d="M0 0 H20 L18.5 1.5 H1.5 V18.5 L0 20 Z" fill="#a0a0a0"/><path d="M1.5 1.5 H18.5 L17 3 H3 V17 L1.5 18.5 Z" fill="#696969"/><rect x="3" y="3" width="14" height="14" fill="#fff"/></svg>
<div style="left:1158.3px;top:895px;font-size:16px;line-height:20px;color:#000;white-space:nowrap;letter-spacing:0.35px;">On Start</div>
<svg style="left:1132px;top:938px" width="20" height="20" viewBox="0 0 20 20"><rect x="0" y="0" width="20" height="20" fill="#fff"/><rect x="0" y="0" width="18.5" height="18.5" fill="#e3e3e3"/><path d="M0 0 H20 L18.5 1.5 H1.5 V18.5 L0 20 Z" fill="#a0a0a0"/><path d="M1.5 1.5 H18.5 L17 3 H3 V17 L1.5 18.5 Z" fill="#696969"/><rect x="3" y="3" width="14" height="14" fill="#fff"/></svg>
<div style="left:1158.3px;top:939px;font-size:16px;line-height:20px;color:#000;white-space:nowrap;letter-spacing:0.3px;">Auto On</div>
<svg style="left:1248px;top:938px" width="20" height="20" viewBox="0 0 20 20"><rect x="0" y="0" width="20" height="20" fill="#fff"/><rect x="0" y="0" width="18.5" height="18.5" fill="#e3e3e3"/><path d="M0 0 H20 L18.5 1.5 H1.5 V18.5 L0 20 Z" fill="#a0a0a0"/><path d="M1.5 1.5 H18.5 L17 3 H3 V17 L1.5 18.5 Z" fill="#696969"/><rect x="3" y="3" width="14" height="14" fill="#fff"/></svg>
<div style="left:1274.3px;top:939px;font-size:16px;line-height:20px;color:#000;white-space:nowrap;letter-spacing:0.7px;">Auto Off</div>
<div style="left:1107px;top:992px;width:759px;height:1px;background:#a0a0a0;"></div>
<div style="left:1108px;top:993px;width:758px;height:1px;background:#fff;"></div>
<div style="left:1107px;top:992px;width:1px;height:73px;background:#a0a0a0;"></div>
<div style="left:1108px;top:993px;width:1px;height:71px;background:#fff;"></div>
<div style="left:1107px;top:1064px;width:759px;height:1px;background:#a0a0a0;"></div>
<div style="left:1107px;top:1065px;width:759px;height:1px;background:#fff;"></div>
<div style="left:1122px;top:986px;font-size:16px;line-height:18px;color:#000;white-space:nowrap;background:#f0f0f0;padding:0 5px;margin-left:-5px;letter-spacing:0px;">Snapshots</div>
<div style="left:1131.3px;top:1021px;font-size:16px;line-height:20px;color:#000;white-space:nowrap;letter-spacing:0px;">Snapshot Type</div>
<div style="left:1335px;top:1015px;width:223px;height:30px;background:#fff;box-sizing:border-box;border:1px solid;border-color:#a0a0a0 #fff #fff #a0a0a0;"><div style="position:absolute;left:0;top:0;right:0;bottom:0;border:1px solid;border-color:#858585 #f1f1f1 #f1f1f1 #858585;box-sizing:border-box;"></div><div style="position:absolute;left:1px;top:1px;right:1px;bottom:1px;border:1px solid;border-color:#696969 #e3e3e3 #e3e3e3 #696969;box-sizing:border-box;"></div><div style="position:absolute;right:3px;top:3px;width:24px;height:24px;background:#f0f0f0;box-sizing:border-box;border:1px solid;border-color:#e3e3e3 #696969 #696969 #e3e3e3;"><div style="position:absolute;left:0;top:0;right:0;bottom:0;border:1px solid;border-color:#fff #a0a0a0 #a0a0a0 #fff;"></div><div style="position:absolute;left:6px;top:9px;width:0;height:0;border-left:5px solid transparent;border-right:5px solid transparent;border-top:5px solid #000;"></div></div><div style="position:absolute;left:4px;top:0;line-height:32px;font-size:16px;color:#000;letter-spacing:0.5px;">(default)</div></div>
<div style="left:1107px;top:1080px;width:759px;height:1px;background:#a0a0a0;"></div>
<div style="left:1108px;top:1081px;width:758px;height:1px;background:#fff;"></div>
<div style="left:1107px;top:1080px;width:1px;height:160px;background:#a0a0a0;"></div>
<div style="left:1108px;top:1081px;width:1px;height:158px;background:#fff;"></div>
<div style="left:1107px;top:1239px;width:759px;height:1px;background:#a0a0a0;"></div>
<div style="left:1107px;top:1240px;width:759px;height:1px;background:#fff;"></div>
<div style="left:1122px;top:1074px;font-size:16px;line-height:18px;color:#000;white-space:nowrap;background:#f0f0f0;padding:0 5px;margin-left:-5px;letter-spacing:0.17px;">Output Mute Functions</div>
<svg style="left:1136px;top:1106px" width="20" height="20" viewBox="0 0 20 20"><rect x="0" y="0" width="20" height="20" fill="#fff"/><rect x="0" y="0" width="18.5" height="18.5" fill="#e3e3e3"/><path d="M0 0 H20 L18.5 1.5 H1.5 V18.5 L0 20 Z" fill="#a0a0a0"/><path d="M1.5 1.5 H18.5 L17 3 H3 V17 L1.5 18.5 Z" fill="#696969"/><rect x="3" y="3" width="14" height="14" fill="#fff"/><path transform="translate(4.8,5.3) scale(1.5,1.32)" d="M0 2 L2.5 4.5 L7 0 L7 3 L2.5 7.5 L0 5 Z" fill="#000"/></svg>
<div style="left:1163.3px;top:1107px;font-size:16px;line-height:20px;color:#000;white-space:nowrap;letter-spacing:0px;">Mute Logic 1</div>
<svg style="left:1276px;top:1106px" width="20" height="20" viewBox="0 0 20 20"><rect x="0" y="0" width="20" height="20" fill="#fff"/><rect x="0" y="0" width="18.5" height="18.5" fill="#e3e3e3"/><path d="M0 0 H20 L18.5 1.5 H1.5 V18.5 L0 20 Z" fill="#a0a0a0"/><path d="M1.5 1.5 H18.5 L17 3 H3 V17 L1.5 18.5 Z" fill="#696969"/><rect x="3" y="3" width="14" height="14" fill="#fff"/></svg>
<div style="left:1302.3px;top:1107px;font-size:16px;line-height:20px;color:#000;white-space:nowrap;letter-spacing:0px;">Mute Logic 2</div>
<svg style="left:1136px;top:1148px" width="20" height="20" viewBox="0 0 20 20"><rect x="0" y="0" width="20" height="20" fill="#fff"/><rect x="0" y="0" width="18.5" height="18.5" fill="#e3e3e3"/><path d="M0 0 H20 L18.5 1.5 H1.5 V18.5 L0 20 Z" fill="#a0a0a0"/><path d="M1.5 1.5 H18.5 L17 3 H3 V17 L1.5 18.5 Z" fill="#696969"/><rect x="3" y="3" width="14" height="14" fill="#fff"/></svg>
<div style="left:1163.3px;top:1149px;font-size:16px;line-height:20px;color:#000;white-space:nowrap;letter-spacing:0px;">Mute Logic 3</div>
<svg style="left:1276px;top:1148px" width="20" height="20" viewBox="0 0 20 20"><rect x="0" y="0" width="20" height="20" fill="#fff"/><rect x="0" y="0" width="18.5" height="18.5" fill="#e3e3e3"/><path d="M0 0 H20 L18.5 1.5 H1.5 V18.5 L0 20 Z" fill="#a0a0a0"/><path d="M1.5 1.5 H18.5 L17 3 H3 V17 L1.5 18.5 Z" fill="#696969"/><rect x="3" y="3" width="14" height="14" fill="#fff"/></svg>
<div style="left:1302.3px;top:1149px;font-size:16px;line-height:20px;color:#000;white-space:nowrap;letter-spacing:0px;">Mute Logic 4</div>
</div>
<div style="left:1866px;top:190px;width:1px;height:977px;background:#fff;"></div>
<div style="left:1100px;top:1166px;width:767px;height:1px;background:#fff;"></div>
<div style="left:1877px;top:215px;width:3px;height:779px;background:#7a7a7a;"></div>
<div style="left:1126px;top:1178px;width:705px;height:3px;background:#7a7a7a;"></div>
<div style="left:370px;top:1207px;width:1537px;height:22px;background:#a0a0a0;"></div>
<div style="left:376.5px;top:1208px;font-size:18px;line-height:22px;color:#fff;white-space:nowrap;letter-spacing:-0.05px;-webkit-text-stroke:0;">Utilities</div>
<svg style="left:1881px;top:1208px" width="21" height="20" viewBox="0 0 21 20"><rect x="1.2" y="0.8" width="18.6" height="18" rx="3.5" fill="#e6f5e3"/><rect x="2.4" y="1.8" width="16.2" height="16" rx="3" fill="#22aa18"/><rect x="5.6" y="5" width="10" height="10" fill="#fff"/><rect x="7.2" y="7.8" width="7" height="5.8" fill="#5bdc3c"/></svg>
<div style="left:377px;top:1264px;width:2px;height:284px;background:#fff;"></div>
<div style="left:377px;top:1264px;width:731px;height:2px;background:#fff;"></div>
<div style="left:1107px;top:1264px;width:1px;height:285px;background:#a0a0a0;"></div>
<div style="left:1108px;top:1264px;width:2px;height:285px;background:#696969;"></div>
<div style="left:377px;top:1546px;width:733px;height:1px;background:#a0a0a0;"></div>
<div style="left:377px;top:1547px;width:733px;height:2px;background:#696969;"></div>
<div style="left:379px;top:1238px;width:87px;height:26px;background:#f0f0f0;box-sizing:border-box;border-left:1px solid #fff;border-top:1px solid #fff;border-right:2px solid #696969;border-radius:2px 2px 0 0;"></div>
<div style="left:385px;top:1242px;font-size:16px;line-height:20px;color:#000;white-space:nowrap;letter-spacing:0.35px;">Navigator</div>
<div style="left:467px;top:1238px;width:92px;height:26px;background:#f0f0f0;box-sizing:border-box;border-left:1px solid #fff;border-top:1px solid #fff;border-right:2px solid #696969;border-radius:2px 2px 0 0;"></div>
<div style="left:474.5px;top:1242px;font-size:16px;line-height:20px;color:#000;white-space:nowrap;letter-spacing:0px;">Search (0)</div>
<div style="left:560px;top:1238px;width:123px;height:26px;background:#f0f0f0;box-sizing:border-box;border-left:1px solid #fff;border-top:1px solid #fff;border-radius:2px 2px 0 0;"></div>
<div style="left:567px;top:1242px;font-size:16px;line-height:20px;color:#000;white-space:nowrap;letter-spacing:0px;">Documentation</div>
<div style="left:683px;top:1235px;width:118px;height:31px;background:#f0f0f0;box-sizing:border-box;border-left:2px solid #fff;border-top:2px solid #fff;border-right:2px solid #696969;border-radius:2px 2px 0 0;"></div>
<div style="left:693px;top:1240px;font-size:16px;line-height:20px;color:#000;white-space:nowrap;letter-spacing:0px;">Messages (2)</div>
<svg style="left:384px;top:1273px" width="36" height="35" viewBox="0 0 36 35"><path d="M6 25 V5 Q6 1 10 1 H25.5 Q29.5 1 29.5 5 V25 H31.5 Q34 25 34 27.5 V31 Q34 34 31 34 H4 Q1 34 1 31 V27.5 Q1 25 3.5 25 Z" fill="#a0a0a0"/></svg>
<div style="left:381px;top:1312px;width:723px;height:232px;background:#fff;box-sizing:border-box;border:1px solid #7e7e7e;box-shadow:inset 0 0 0 1px rgba(126,126,126,0.4);"></div>
<div style="left:383px;top:1314px;width:719px;height:25px;background:#f0f0f0;"></div>
<div style="left:383px;top:1338px;width:719px;height:1px;background:#a0a0a0;"></div>
<div style="left:523px;top:1314px;width:1px;height:24px;background:#a0a0a0;"></div>
<div style="left:524px;top:1314px;width:1px;height:24px;background:#fff;"></div>
<div style="left:383px;top:1339px;width:719px;height:28px;background:#d4d4d4;"></div>
<div style="left:390px;top:1317px;width:19px;height:19px;box-sizing:border-box;border:2px solid #1c2a70;background:linear-gradient(135deg,#dcdcdc 0%,#f6f6f6 45%,#ffffff 100%);"></div>
<div style="left:390px;top:1343px;width:19px;height:19px;box-sizing:border-box;border:2px solid #1c2a70;background:linear-gradient(135deg,#dcdcdc 0%,#f6f6f6 45%,#ffffff 100%);"></div>
<div style="left:390px;top:1371px;width:19px;height:19px;box-sizing:border-box;border:2px solid #1c2a70;background:linear-gradient(135deg,#dcdcdc 0%,#f6f6f6 45%,#ffffff 100%);"></div>
<div style="left:420.5px;top:1317px;font-size:16px;line-height:20px;color:#000;white-space:nowrap;letter-spacing:0.35px;">To Archive</div>
<div style="left:532px;top:1317px;font-size:16px;line-height:20px;color:#000;white-space:nowrap;">Info</div>
<div style="left:536px;top:1343px;font-size:16px;line-height:20px;color:#000;white-space:nowrap;letter-spacing:-0.4px;">WARN</div>
<div style="left:595px;top:1343px;font-size:16px;line-height:20px;color:#000;white-space:nowrap;letter-spacing:0.26px;">Wed Oct 23 10:33:50 2024</div>
<div style="left:796px;top:1343px;font-size:16px;line-height:20px;color:#000;white-space:nowrap;letter-spacing:0.17px;">RX2.Central.Default View - (None) is n...</div>
<div style="left:536px;top:1371px;font-size:16px;line-height:20px;color:#000;white-space:nowrap;letter-spacing:-0.4px;">WARN</div>
<div style="left:595px;top:1371px;font-size:16px;line-height:20px;color:#000;white-space:nowrap;letter-spacing:0.26px;">Wed Oct 23 11:19:58 2024</div>
<div style="left:796px;top:1371px;font-size:16px;line-height:20px;color:#000;white-space:nowrap;letter-spacing:0.17px;">RX2.Central.Default View - (None) is n...</div>
<div style="left:1127px;top:1234px;width:773px;height:314px;background:#fff;box-sizing:border-box;border:1px solid;border-color:#a0a0a0 #fff #fff #a0a0a0;"><div style="position:absolute;left:0;top:0;right:0;bottom:0;border:1px solid;border-color:#858585 #f1f1f1 #f1f1f1 #858585;box-sizing:border-box;"></div><div style="position:absolute;left:1px;top:1px;right:1px;bottom:1px;border:1px solid;border-color:#696969 #e3e3e3 #e3e3e3 #696969;box-sizing:border-box;"></div></div>
<div style="left:1130px;top:1237px;width:767px;height:24px;background:#f0f0f0;"></div>
<div style="left:1130px;top:1261px;width:767px;height:1px;background:#a0a0a0;"></div>
<div style="left:1130px;top:1237px;width:1px;height:24px;background:#fff;"></div>
<div style="left:1130px;top:1237px;width:767px;height:1px;background:#fff;"></div>
<div style="left:1896px;top:1237px;width:1px;height:24px;background:#a0a0a0;"></div>
<div style="left:1137.5px;top:1241px;font-size:16px;line-height:20px;color:#000;white-space:nowrap;">Clipboard</div>
<div style="left:0;top:0;width:1907px;height:1582px;box-sizing:border-box;border-radius:8px;border:1px solid #a6a6a6;border-top:2px solid #aaaaaa;border-left-color:#b2b2b2;pointer-events:none;"></div>
</div>
</body></html>
